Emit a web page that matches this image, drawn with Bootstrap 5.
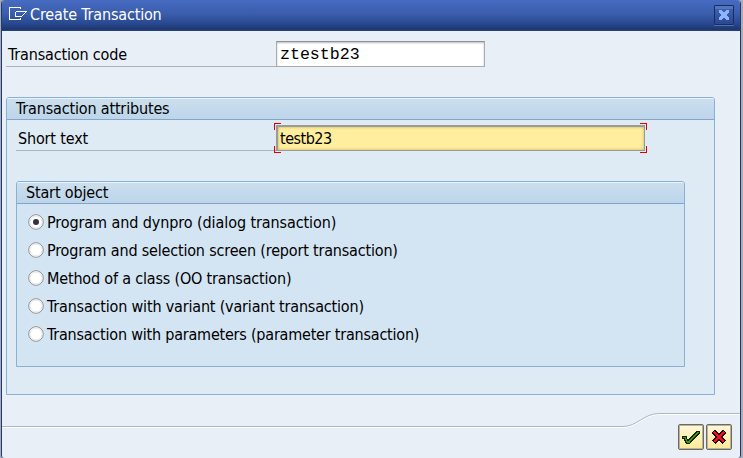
<!DOCTYPE html>
<html lang="en">
<head>
<meta charset="utf-8">
<title>Create Transaction</title>
<link rel="stylesheet" href="https://cdn.jsdelivr.net/npm/bootstrap@5.3.0/dist/css/bootstrap.min.css">
<style>
body{width:743px;height:458px;overflow:hidden;background:#a9acb5;font:16px/20px "DejaVu Sans Condensed","DejaVu Sans",sans-serif;font-stretch:condensed;color:#000;letter-spacing:-.16px}
.dialog-window{width:740px;height:458px;margin-left:1px;background:#e8eff7;border-left:1px solid #203873;border-right:1px solid #203873;border-radius:4px 4px 3px 3px;overflow:hidden}
.title-strip{height:31px;background:linear-gradient(#466bc1,#3a5dac 45%,#26468b 80%,#1c366f 94%,#2c4583);color:#fff;padding:0 6px 3px 6px}
.window-caption{margin-left:2px;padding-top:2px}
.close-box{width:20px;height:20px;border:1px solid #162d66;background:linear-gradient(#5574ba 0 3px,#3e60aa 3px,#29498f);border-radius:1px;margin-top:2px;box-shadow:0 1px #5270b0}
.dialog-body{height:396px;padding:10px 0 0 4px}
.field-label{width:270px;border-bottom:1px solid #b0b2b6;height:26px;padding:4px 0 0 2px}
.short-row{padding-left:9px;padding-top:5px}
.short-row .field-label{width:260px;padding:4px 0 0 2px}
.entry{height:26px;border:1px solid #aaadb0;border-top:1px solid #909497;background:#fff;box-shadow:inset 0 1px 2px #bbb;padding:2px 3px}
.code-entry{width:209px;font:16.6px/22px "Liberation Mono",monospace;letter-spacing:0}
.text-entry{width:369px;background:#ffee9d;border-width:2px 1px 1px 2px;border-color:#9c9c93;box-shadow:inset 0 0 3px #baa86b;padding:2px 2px;letter-spacing:-.5px}
.corner{position:absolute;width:7px;height:7px;border:0 solid #e00000}
.c-tl{left:-4px;top:-4px;border-width:1px 0 0 1px}
.c-tr{right:-3px;top:-4px;border-width:1px 1px 0 0}
.c-bl{left:-4px;bottom:-3px;border-width:0 0 1px 1px}
.c-br{right:-3px;bottom:-3px;border-width:0 1px 1px 0}
.panel-box{border:1px solid #8bb0d5;border-radius:3px 3px 0 0}
.panel-title{height:22px;line-height:21px;border-bottom:1px solid #84a5c8;background:linear-gradient(#e9f3fb 0 1px,#cbdeed 1px,#bdd5ea);padding-left:9px;border-radius:2px 2px 0 0}
.outer-panel{width:709px;height:298px;margin-top:30px;background:#deeaf4}
.inner-panel{width:669px;height:186px;margin:30px 0 0 9px;background:#d3e4f3}
.choice{height:28px;padding-left:11px;gap:3px;cursor:default;letter-spacing:-.18px}
.choice:first-child{letter-spacing:-.09px}
.choice:last-child{letter-spacing:-.21px}
.choice svg{flex:none}
.choice span{padding-top:1px}
.footer-strip{height:60px;margin-top:-29px}
.action-btn{width:26px;height:26px;border:1px solid #6c6a66;outline:0;border-radius:2px;background:linear-gradient(#fff8da,#ffe997);box-shadow:inset 0 0 0 1px #b9b196;padding:0}
.action-row{position:absolute;right:8px;top:26px;gap:2px}
</style>
<script src="https://cdn.jsdelivr.net/npm/bootstrap@5.3.0/dist/js/bootstrap.bundle.min.js"></script>
</head>
<body>
<main class="dialog-window">
  <header class="title-strip d-flex align-items-center">
    <svg width="20" height="16" viewBox="0 0 20 16" fill="none" stroke="#fff" shape-rendering="crispEdges"><path d="M12.500 3V1.500H1.500V13.500H12.500V12M7.500 5.500H18.500M7.500 5.500V10.500H13M17 6.500h1M16 7.500h1M15 8.500h1M14 9.500h1M13 10.500h1"/></svg>
    <span class="window-caption">Create Transaction</span>
    <span class="close-box ms-auto d-flex align-items-center justify-content-center"><svg width="12" height="12" viewBox="0 0 12 12" shape-rendering="crispEdges" fill="#8db5ff"><path d="M1 1h3v1h1v1h2V2h1V1h3v3h-1v1H9v2h1v1h1v3H8v-1H7V9H5v1H4v1H1V8h1V7h1V5H2V4H1z"/></svg></span>
  </header>
  <div class="dialog-body">
    <div class="d-flex">
      <div class="field-label">Transaction code</div>
      <div class="entry code-entry">ztestb23</div>
    </div>
    <section class="panel-box outer-panel">
      <div class="panel-title">Transaction attributes</div>
      <div class="d-flex short-row">
        <div class="field-label">Short text</div>
        <div class="entry text-entry position-relative">testb23<i class="corner c-tl"></i><i class="corner c-tr"></i><i class="corner c-bl"></i><i class="corner c-br"></i></div>
      </div>
      <section class="panel-box inner-panel">
        <div class="panel-title">Start object</div>
        <div class="pt-1 d-flex flex-column">
          <div class="choice d-flex align-items-center"><svg width="16" height="16"><circle cx="8" cy="8" r="7.300" fill="#fff" stroke="#929292"/><circle cx="8" cy="8" r="6" fill="none" stroke="#e4e4e4"/><circle cx="8" cy="8" r="3" fill="#303047"/></svg><span>Program and dynpro (dialog transaction)</span></div>
          <div class="choice d-flex align-items-center"><svg width="16" height="16"><circle cx="8" cy="8" r="7.300" fill="#fff" stroke="#929292"/><circle cx="8" cy="8" r="6" fill="none" stroke="#e4e4e4"/></svg><span>Program and selection screen (report transaction)</span></div>
          <div class="choice d-flex align-items-center"><svg width="16" height="16"><circle cx="8" cy="8" r="7.300" fill="#fff" stroke="#929292"/><circle cx="8" cy="8" r="6" fill="none" stroke="#e4e4e4"/></svg><span>Method of a class (OO transaction)</span></div>
          <div class="choice d-flex align-items-center"><svg width="16" height="16"><circle cx="8" cy="8" r="7.300" fill="#fff" stroke="#929292"/><circle cx="8" cy="8" r="6" fill="none" stroke="#e4e4e4"/></svg><span>Transaction with variant (variant transaction)</span></div>
          <div class="choice d-flex align-items-center"><svg width="16" height="16"><circle cx="8" cy="8" r="7.300" fill="#fff" stroke="#929292"/><circle cx="8" cy="8" r="6" fill="none" stroke="#e4e4e4"/></svg><span>Transaction with parameters (parameter transaction)</span></div>
        </div>
      </section>
    </section>
  </div>
  <footer class="footer-strip position-relative">
    <svg class="d-block" width="738" height="60" viewBox="0 0 738 60" fill="none"><path d="M0 29.500H621C635 29.500 642 16.500 657 16.500H738" stroke="#fff"/><path d="M0 28.500H621C635 28.500 642 15.500 657 15.500H738" stroke="#a9bace"/></svg>
    <div class="action-row d-flex">
      <button class="action-btn d-flex align-items-center justify-content-center" aria-label="Continue"><svg width="20" height="16" viewBox="0 0 20 16" shape-rendering="crispEdges"><path d="M1 7h5v3h2V9h1V8h1V7h1V6h1V5h1V4h1V3h1V2h4v3h-1v1h-1v1h-1v1h-1v1h-1v1h-1v1h-1v1h-1v1h-1v1H9v1H5v-1H4v-2H3v-2H1z" fill="#152300"/><path d="M2 8h3v2h1v2h2v-1h1v-1h1V9h1V8h1V7h1V6h1V5h1V4h1V3h2v1h-1v1h-1v1h-1v1h-1v1h-1v1h-1v1h-1v1h-1v1h-1v1H9v1H6v-1H5v-2H4v-2H2z" fill="#3e980e"/></svg></button>
      <button class="action-btn d-flex align-items-center justify-content-center" aria-label="Cancel"><svg width="14" height="14" viewBox="0 0 14 14" shape-rendering="crispEdges"><path d="M1.500 1.500 12.500 12.500M12.500 1.500 1.500 12.500" stroke="#240000" stroke-width="4.400"/><path d="M2 2 12 12M12 2 2 12" stroke="#f3101c" stroke-width="2.600"/></svg></button>
    </div>
  </footer>
</main>
</body>
</html>
